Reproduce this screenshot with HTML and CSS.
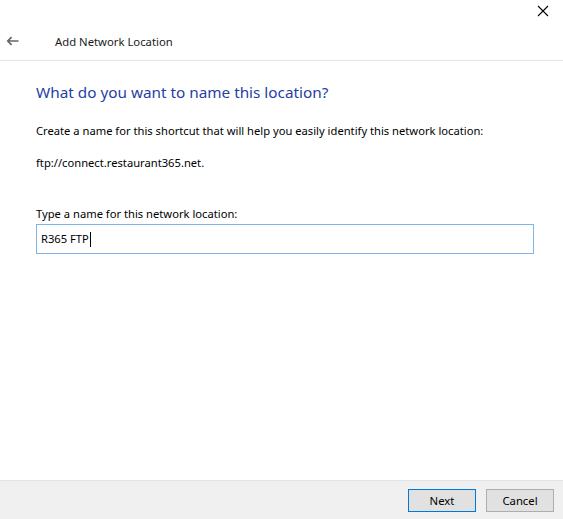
FILE: index.html
```html
<!DOCTYPE html>
<html lang="en">
<head>
    <meta charset="UTF-8">
    <title>Add Network Location</title>
    <link rel="stylesheet" href="styles.css">
</head>
<body>
    <div class="wizard">
        <div class="title-strip">
            <button class="close-button" aria-label="Close">
                <svg width="12" height="12" viewBox="0 0 12 12"><path d="M1 1L11 11M11 1L1 11" stroke="#000" stroke-width="1.1" fill="none"/></svg>
            </button>
        </div>
        <div class="wizard-header">
            <span class="back-arrow">
                <svg width="13" height="10" viewBox="0 0 13 10"><path d="M12.5 5H1.8M5.6 1.2L1.8 5L5.6 8.8" stroke="#666666" stroke-width="1.7" fill="none"/></svg>
            </span>
            <span class="wizard-title">Add Network Location</span>
        </div>
        <div class="wizard-body">
            <h1>What do you want to name this location?</h1>
            <p>Create a name for this shortcut that will help you easily identify this network location:</p>
            <p class="address">ftp://connect.restaurant365.net.</p>
            <label class="name-label" for="locationName">Type a name for this network location:</label>
            <div class="name-input">R365 FTP<span class="caret"></span></div>
        </div>
        <div class="wizard-footer">
            <button class="btn btn-default">Next</button>
            <button class="btn">Cancel</button>
        </div>
    </div>
</body>
</html>
```

FILE: styles.css
```css
html, body {
    margin: 0;
    height: 100%;
}
body {
    font-family: "Segoe UI", "Noto Sans", Arial, sans-serif;
    background: #ffffff;
    color: #000000;
}
.wizard {
    height: 519px;
    display: flex;
    flex-direction: column;
}
.title-strip {
    height: 22px;
    display: flex;
    justify-content: flex-end;
}
.close-button {
    width: 30px;
    height: 22px;
    padding: 0;
    margin-right: 5px;
    border: none;
    background: none;
    display: flex;
    align-items: center;
    justify-content: center;
}
.wizard-header {
    height: 38px;
    display: flex;
    align-items: center;
    border-bottom: 1px solid #e6e6e6;
}
.back-arrow {
    width: 13px;
    margin-left: 6px;
    display: flex;
}
.wizard-title {
    margin-left: 36px;
    font-size: 11.3px;
    color: #1a1a1a;
    padding-top: 1px;
}
.wizard-body {
    flex: 1;
    padding: 0 29px 0 36px;
}
h1 {
    font-size: 15.3px;
    font-weight: normal;
    color: #1f3fa3;
    margin: 21px 0 0;
    line-height: 21px;
}
p {
    font-size: 11.2px;
    margin: 20px 0 0;
    line-height: 16px;
}
.address {
    margin-top: 16px;
}
.name-label {
    display: block;
    font-size: 11.2px;
    margin-top: 35px;
    line-height: 16px;
}
.name-input {
    height: 28px;
    margin-top: 2px;
    border: 1px solid #7eb4ea;
    font-size: 11.2px;
    line-height: 28px;
    padding-left: 4px;
    display: flex;
    align-items: center;
}
.caret {
    width: 1px;
    height: 15px;
    background: #000000;
    margin-left: 1px;
}
.wizard-footer {
    height: 38px;
    background: #f0f0f0;
    border-top: 1px solid #e3e3e3;
    display: flex;
    justify-content: flex-end;
    align-items: center;
    padding-right: 9px;
    gap: 10px;
}
.btn {
    width: 68px;
    height: 23px;
    font-family: inherit;
    font-size: 11.3px;
    background: #e1e1e1;
    border: 1px solid #adadad;
    padding: 0;
    color: #000000;
}
.btn-default {
    border-color: #0078d7;
}
```
